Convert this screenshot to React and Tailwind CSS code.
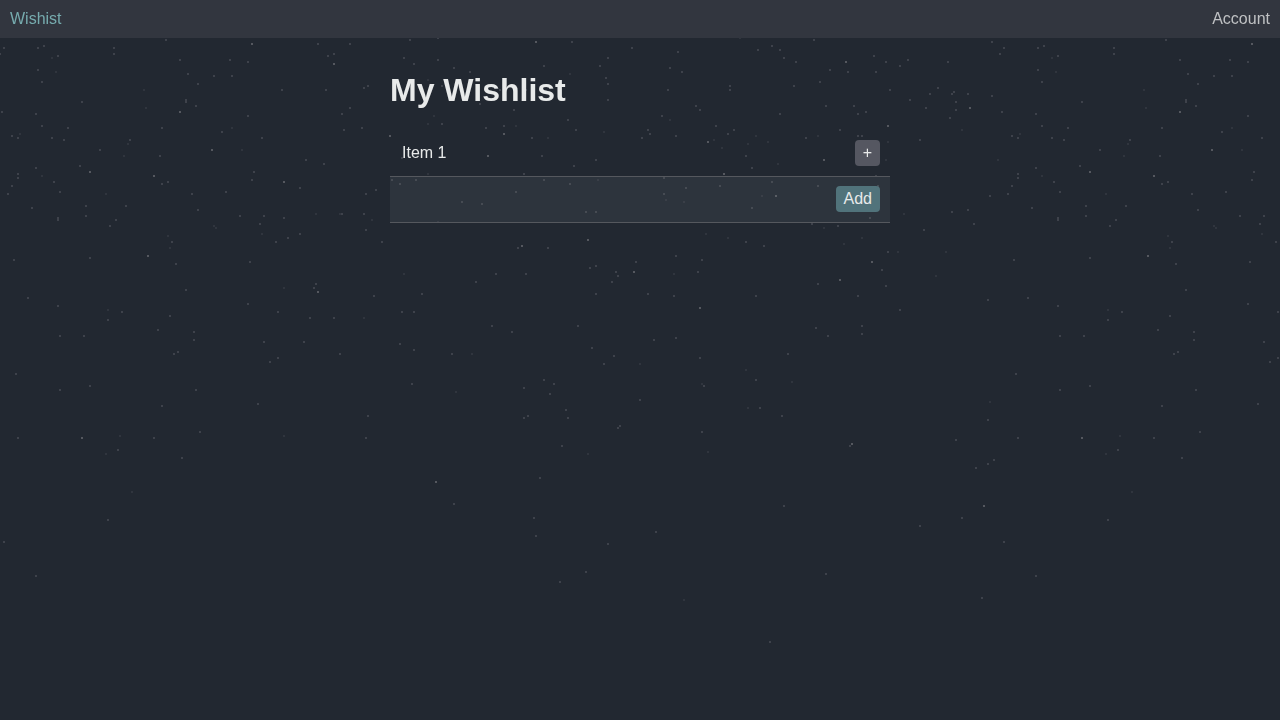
import React, { useId } from "react";

// Star centres within one 1000px-wide tile, grouped by brightness.
const BRIGHT =
  "252,44 180,112 212,150 90,172 154,176 284,182 334,64 536,42 390,136 504,134 488,156 846,62 970,108 888,126 708,142 824,160 724,174 776,196 148,256 318,292 82,438 588,240 522,246 634,272 872,262 840,280 700,308 852,444 436,482 984,506";

const MEDIUM =
  "166,40 44,46 38,48 4,48 0,54 1000,54 114,48 114,54 58,56 318,44 328,56 180,60 230,60 248,62 38,70 42,82 188,74 214,76 232,76 198,84 282,90 326,90 82,102 186,100 186,102 196,106 2,112 36,114 248,116 42,126 68,128 162,128 222,132 12,136 18,138 52,138 64,140 130,140 262,138 100,150 160,156 306,160 324,164 80,166 36,168 254,172 18,174 18,178 252,180 54,182 168,182 162,184 12,186 300,188 60,192 8,194 192,194 226,192 86,206 126,206 32,208 198,210 86,216 240,216 264,216 58,218 58,220 284,218 116,220 110,226 260,224 300,234 288,238 " +
  "350,44 334,54 410,40 438,38 572,42 632,48 404,58 414,64 438,60 608,58 454,68 470,72 544,66 600,66 606,78 608,84 608,100 442,86 364,88 368,86 500,90 526,90 350,108 342,114 480,104 514,110 442,124 568,120 576,130 344,130 362,128 486,128 504,126 532,138 642,138 402,158 542,156 574,166 596,160 524,174 392,180 416,180 400,184 544,180 570,184 376,190 366,194 516,192 462,202 482,204 586,212 596,212 342,214 364,214 366,230 " +
  "814,40 678,52 772,46 758,50 780,50 784,58 796,62 874,56 908,60 886,62 900,66 948,62 670,68 682,72 830,70 848,72 876,72 820,82 668,90 730,86 730,90 794,86 890,90 938,88 954,92 952,94 930,94 968,94 910,100 926,108 956,102 956,110 950,118 696,106 700,110 826,106 854,106 858,114 866,112 780,114 662,116 716,126 648,130 650,134 728,134 734,130 840,130 676,136 806,138 858,136 862,136 920,140 746,156 752,168 876,176 664,178 720,186 686,188 772,182 818,186 878,186 664,194 752,208 870,218 812,224 838,226 952,212 968,210 924,230 992,42 992,96 990,196 974,224 " +
  "276,242 172,242 14,260 90,258 176,264 250,262 316,284 314,288 186,290 28,298 58,306 248,304 122,312 278,312 108,320 170,316 310,318 158,330 194,332 194,340 60,336 84,336 264,342 304,342 178,352 174,354 278,358 270,362 16,374 90,386 60,390 196,390 162,406 258,404 200,432 18,438 154,438 118,450 182,458 " +
  "382,242 518,248 548,248 596,266 590,268 636,262 616,272 618,276 612,282 496,274 526,274 476,282 374,296 422,294 596,294 648,294 402,312 414,312 334,318 492,326 512,332 578,326 400,344 414,350 592,348 614,356 604,364 340,354 452,354 544,380 554,384 412,384 524,388 550,394 566,410 368,416 528,416 524,418 568,418 640,400 620,426 618,428 366,438 562,446 " +
  "746,242 764,246 676,256 702,260 888,252 882,270 698,272 818,284 886,286 674,296 756,296 858,296 988,300 900,310 816,328 862,326 828,336 862,334 654,340 676,338 788,354 700,358 756,380 704,386 760,408 782,416 702,432 850,446 988,420 956,440 994,460 988,464 976,468 540,478 454,504 534,518 536,536 656,532 608,544 586,572 560,582 770,642 108,520 4,542 36,576 784,506 962,518 920,526 826,574 982,598";

const DIM =
  "52,58 56,72 144,90 146,108 232,128 20,134 128,144 242,150 124,156 42,176 106,194 316,214 214,226 216,228 262,234 168,236 570,74 428,80 434,116 428,124 604,132 516,126 548,138 428,174 598,180 340,214 372,220 438,222 740,38 670,120 962,130 714,140 756,136 818,136 888,142 722,148 748,144 768,142 886,160 778,164 666,200 684,202 762,196 824,228 904,214 706,234 728,238 862,238 998,160 170,248 284,288 108,310 120,436 284,436 106,454 404,274 364,318 472,354 640,364 456,392 588,454 844,244 898,252 946,252 936,276 674,274 746,370 792,382 702,384 748,408 708,452 990,402 684,600 132,492";

function starPath(points) {
  return points
    .split(" ")
    .map((point) => {
      const [x, y] = point.split(",").map(Number);
      return `M${x - 1} ${y - 1}h2v2h-2z`;
    })
    .join("");
}

function Starfield() {
  const id = useId();
  return (
    <svg
      className="pointer-events-none fixed inset-0 -z-10 h-full w-full"
      aria-hidden="true"
      shapeRendering="crispEdges"
    >
      <defs>
        <pattern id={id} width="1000" height="1000" patternUnits="userSpaceOnUse">
          <path d={starPath(DIM)} fill="#30353e" />
          <path d={starPath(MEDIUM)} fill="#3e424b" />
          <path d={starPath(BRIGHT)} fill="#55585f" />
        </pattern>
      </defs>
      <rect width="100%" height="100%" fill={`url(#${id})`} />
    </svg>
  );
}

function Header() {
  return (
    <header className="flex items-center justify-between bg-[#32363f] p-2.5 leading-[18px]">
      <a href="#home" className="text-[#76abae]">
        Wishist
      </a>
      <a href="#account" className="text-[#bfc1c3]">
        Account
      </a>
    </header>
  );
}

function WishlistItem({ name }) {
  return (
    <li className="flex items-center justify-between py-2.5 pr-2.5 pl-3">
      <span className="leading-[26px]">{name}</span>
      <button
        type="button"
        aria-label={`Add to ${name}`}
        className="rounded bg-[#555761] px-2 py-1 leading-[18px]"
      >
        +
      </button>
    </li>
  );
}

function AddItemForm() {
  return (
    <form
      className="flex items-center border-y border-[#55585e] bg-[#808f98]/12 pt-[9px] pr-2.5 pb-2.5 pl-3"
      onSubmit={(event) => event.preventDefault()}
    >
      <input
        type="text"
        aria-label="New item"
        className="h-[26px] min-w-0 flex-1 bg-transparent outline-none"
      />
      <button type="submit" className="rounded bg-[#51737b] px-2 py-1 leading-[18px]">
        Add
      </button>
    </form>
  );
}

export default function App() {
  return (
    <div className="relative isolate min-h-screen bg-[#222831] font-['Liberation_Sans',Arial,sans-serif] text-base text-[#e8eaea]">
      <Starfield />
      <Header />
      <main className="mx-auto w-full max-w-[500px] pt-8">
        <h1 className="mb-5 text-[32px] leading-10 font-bold">My Wishlist</h1>
        <ul>
          <WishlistItem name="Item 1" />
        </ul>
        <AddItemForm />
      </main>
    </div>
  );
}
